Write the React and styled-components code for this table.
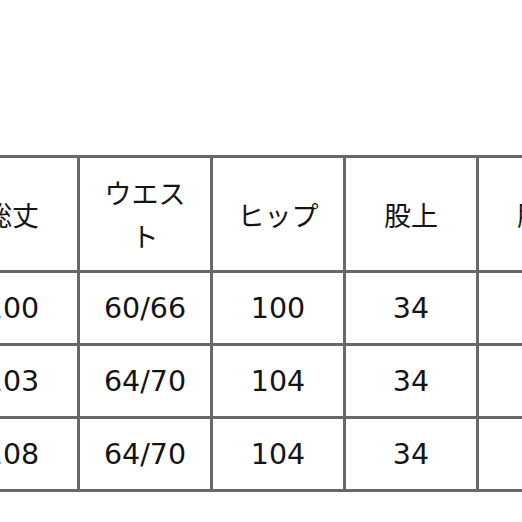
import styled, { createGlobalStyle } from 'styled-components'

const GlobalStyle = createGlobalStyle`
	html, body {
		margin: 0;
		padding: 0;
		background: #fff;
		overflow: hidden;
	}
`

const Page = styled.div`
	width: 522px;
	height: 522px;
	padding-top: 155px;
	box-sizing: border-box;
	overflow: hidden;
`

const SizeTable = styled.table`
	border-collapse: collapse;
	table-layout: fixed;
	width: 665px;
	margin-left: -56px;
	color: #141414;
`

const HeadCell = styled.th`
	border: 3px solid #686868;
	height: 112px;
	padding: 0 14px;
	font-family: 'Noto Sans CJK JP', sans-serif;
	font-size: 27px;
	font-weight: 400;
	line-height: 43px;
	text-align: center;
	vertical-align: middle;
`

const Cell = styled.td`
	border: 3px solid #686868;
	height: 70px;
	padding: 0;
	font-family: 'DejaVu Sans', 'Noto Sans CJK JP', sans-serif;
	font-size: 28.5px;
	text-align: center;
	vertical-align: middle;
`

const headers = ['総丈', 'ウエスト', 'ヒップ', '股上', '股下']

const rows = [
	['100', '60/66', '100', '34', '76'],
	['103', '64/70', '104', '34', '78'],
	['108', '64/70', '104', '34', '80'],
]

export default function App() {
	return (
		<>
			<GlobalStyle />
			<Page>
				<SizeTable>
					<colgroup>
						{headers.map(h => (
							<col key={h} style={{ width: 133 }} />
						))}
					</colgroup>
					<thead>
						<tr>
							{headers.map(h => (
								<HeadCell key={h}>{h}</HeadCell>
							))}
						</tr>
					</thead>
					<tbody>
						{rows.map((row, i) => (
							<tr key={i}>
								{row.map((v, j) => (
									<Cell key={j}>{v}</Cell>
								))}
							</tr>
						))}
					</tbody>
				</SizeTable>
			</Page>
		</>
	)
}
